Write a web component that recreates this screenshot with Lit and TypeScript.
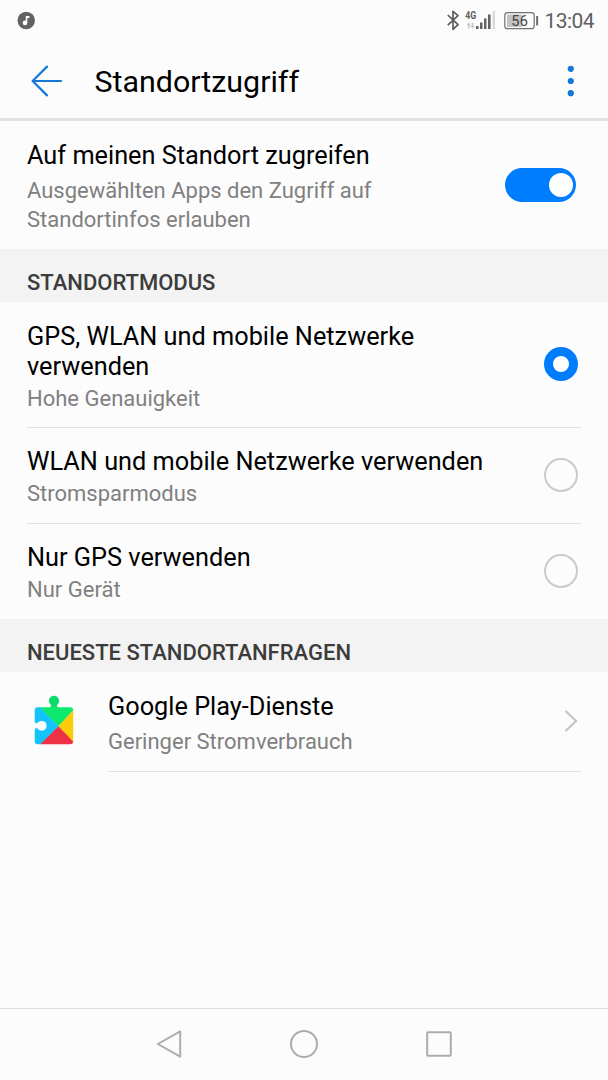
import { LitElement, html, css, svg, nothing } from "lit";
import { customElement, property, state } from "lit/decorators.js";
import { classMap } from "lit/directives/class-map.js";

@customElement("status-bar")
class StatusBar extends LitElement {
  static styles = css`
    :host { display: block; height: 42px; flex: none; }
    svg { display: block; }
    .sys { font-family: Roboto, sans-serif; fill: #5f5f5f; }
    .clock { font-size: 21px; }
    .level { font-size: 14.5px; fill: #444; }
    .net { font-size: 10.5px; font-weight: 700; }
  `;
  render() {
    return html`<svg width="608" height="42" viewBox="0 0 608 42">
      <circle cx="26.2" cy="20.5" r="8.7" fill="#626262" />
      <g fill="#fff">
        <circle cx="25" cy="22.9" r="2.3" />
        <path d="M25.8 16h3.6v2.1h-2.1v4.8h-1.5z" />
      </g>
      <path d="M447.8 15l10.2 9.6-5 4.8V11.3l5 4.4-10.2 9.4" fill="none" stroke="#5c5c5c" stroke-width="1.7" stroke-linejoin="round" />
      <text class="sys net" x="465.3" y="18.9" textLength="11" lengthAdjust="spacingAndGlyphs">4G</text>
      <g fill="#c8c8c8">
        <path d="M468.8 22.6l2.3 2.6h-1.5v3.2H468v-3.2h-1.5zM472.6 28.6l-2.3-2.6h1.5v-3.2h1.6V26h1.5z" />
      </g>
      <g fill="#636363">
        <rect x="476" y="26" width="2.5" height="3" />
        <rect x="480" y="22.5" width="2.5" height="6.5" />
        <rect x="484" y="18.5" width="2.5" height="10.5" />
        <rect x="488" y="14.5" width="2.6" height="14.5" />
      </g>
      <rect x="492.6" y="11" width="2.4" height="18" fill="#d9d9d9" />
      <rect x="507" y="14.5" width="15" height="12.5" fill="#c2c2c2" />
      <rect x="504.8" y="12.7" width="29.4" height="16" rx="2.8" fill="none" stroke="#717171" stroke-width="1.2" />
      <rect x="536.2" y="16" width="1.9" height="9.4" fill="#666" />
      <text class="sys level" x="511.3" y="26" textLength="16.5">56</text>
      <text class="sys clock" x="544.6" y="28.4" textLength="50">13:04</text>
    </svg>`;
  }
}

@customElement("action-bar")
class ActionBar extends LitElement {
  @property() heading = "";
  static styles = css`
    :host {
      display: flex; align-items: center; box-sizing: border-box; flex: none;
      height: 79px; padding: 0 30px; border-bottom: 3px solid #e1e1e1;
      font-family: Roboto, sans-serif;
    }
    svg { display: block; flex: none; }
    .title { flex: 1; margin: 4px 0 0 30.5px; font-size: 30.4px; line-height: 36px; color: #000; }
    .more { margin-top: 2px; }
    .back { margin-top: 2px; }
  `;
  render() {
    return html`
      <svg class="back" width="34" height="34" viewBox="0 0 34 34" fill="none" stroke="#1478d8" stroke-width="2.2" stroke-linecap="round" stroke-linejoin="round">
        <path d="M31 17H2.6M17 2.6L2.6 17 17 31.4" />
      </svg>
      <div class="title">${this.heading}</div>
      <svg class="more" width="14" height="34" viewBox="0 0 14 34" fill="#1478d8">
        <circle cx="6.8" cy="4.8" r="3.1" /><circle cx="6.8" cy="17" r="3.1" /><circle cx="6.8" cy="29.2" r="3.1" />
      </svg>`;
  }
}

@customElement("app-root")
class AppRoot extends LitElement {
  @state() private enabled = true;
  @state() private mode = 0;

  private modes = [
    { title: "GPS, WLAN und mobile Netzwerke verwenden", note: "Hohe Genauigkeit" },
    { title: "WLAN und mobile Netzwerke verwenden", note: "Stromsparmodus" },
    { title: "Nur GPS verwenden", note: "Nur Gerät" },
  ];

  static styles = css`
    :host {
      display: flex; flex-direction: column; box-sizing: border-box;
      width: 608px; height: 1080px; overflow: hidden;
      background: #fcfcfc; color: #000; font-family: Roboto, sans-serif;
    }
    .row { display: flex; align-items: center; box-sizing: border-box; flex: none; padding: 0 27px; }
    .text { flex: 1; min-width: 0; }
    .title { font-size: 25.3px; line-height: 30px; }
    .note { margin-top: 2px; font-size: 22px; line-height: 29px; color: #808080; }
    .access { height: 128px; padding-right: 32px; justify-content: space-between; }
    .access .text { max-width: 360px; margin-top: 4px; }
    .access .note, .app .note { margin-top: 5px; }
    .mode { height: 95px; }
    .mode .text { padding-right: 48px; margin-top: 4px; }
    .mode.tall { height: 125px; }
    .mode.tall .text { margin-top: 5px; }
    .rule { flex: none; height: 1px; margin: 0 27px; background: #e0e0e0; }
    .rule.inset { margin-left: 108px; }
    .section {
      display: flex; align-items: flex-end; box-sizing: border-box; flex: none;
      height: 53px; padding: 0 27px 5px; background: #f3f3f3;
      font-size: 22px; line-height: 28px; font-weight: 500; color: #3c3c3c;
    }
    .switch {
      display: flex; align-items: center; justify-content: flex-end; box-sizing: border-box;
      width: 71px; height: 34px; margin-bottom: 1px; padding: 0 3.5px; border-radius: 17px; background: #007dff;
    }
    .switch.off { justify-content: flex-start; background: #bbb; }
    .knob { width: 24px; height: 24px; border-radius: 50%; background: #fff; }
    .radio { box-sizing: border-box; width: 34px; height: 34px; margin: 0 3px 1px 0; border: 2px solid #cacaca; border-radius: 50%; }
    .radio.on { border: 9px solid #007dff; background: #fff; }
    .app { height: 99px; }
    .app .text { margin-top: 4px; }
    .logo { margin: 0 28px 2px 0; }
    .chevron { margin-bottom: 1px; }
    svg { display: block; flex: none; }
    .fill { flex: 1; }
    .nav {
      display: flex; align-items: center; justify-content: center; gap: 101px;
      box-sizing: border-box; flex: none; height: 72px; padding-bottom: 2px; border-top: 1px solid #dedede;
    }
  `;

  private renderMode(m: { title: string; note: string }, i: number) {
    const last = i === this.modes.length - 1;
    return html`
      <div class=${classMap({ row: true, mode: true, tall: i === 0 })} @click=${() => (this.mode = i)}>
        <div class="text"><div class="title">${m.title}</div><div class="note">${m.note}</div></div>
        <div class=${classMap({ radio: true, on: this.mode === i })}></div>
      </div>
      ${last ? nothing : html`<div class="rule"></div>`}`;
  }

  render() {
    return html`
      <status-bar></status-bar>
      <action-bar heading="Standortzugriff"></action-bar>
      <div class="row access">
        <div class="text">
          <div class="title">Auf meinen Standort zugreifen</div>
          <div class="note">Ausgewählten Apps den Zugriff auf Standortinfos erlauben</div>
        </div>
        <div class=${classMap({ switch: true, off: !this.enabled })} @click=${() => (this.enabled = !this.enabled)}>
          <div class="knob"></div>
        </div>
      </div>
      <div class="section">STANDORTMODUS</div>
      ${this.modes.map((m, i) => this.renderMode(m, i))}
      <div class="section">NEUESTE STANDORTANFRAGEN</div>
      <div class="row app">
        <svg class="logo" width="53" height="53" viewBox="27 694 53 53">
          <defs><clipPath id="piece"><rect x="34.7" y="707.3" width="38.5" height="37" rx="3" /></clipPath></defs>
          <g clip-path="url(#piece)">
            <path d="M34 707h6l18.5 19.3L40 745h-6z" fill="#12c4fb" />
            <path d="M39 706.5h38L58.5 726.3z" fill="#0bea6e" />
            <path d="M76 707V745h-1L58.5 726.3z" fill="#fdcd0b" />
            <path d="M58.5 726.3L76.5 745H39.5z" fill="#ee3145" />
          </g>
          <circle cx="54" cy="700.8" r="5.1" fill="#0bdc69" />
          <path d="M51 703h6v3q0 1.6 2 1.8H49q2-.2 2-1.8z" fill="#0bdc69" />
          <circle cx="41.7" cy="725.8" r="4.9" fill="#fcfcfc" />
          <path d="M34 721.5q1.5 2 3.2 2h2v4.6h-2q-1.7 0-3.2 2z" fill="#fcfcfc" />
        </svg>
        <div class="text"><div class="title">Google Play-Dienste</div><div class="note">Geringer Stromverbrauch</div></div>
        <svg class="chevron" width="20" height="26" viewBox="0 0 20 26" fill="none" stroke="#c4c4c4" stroke-width="2.2"><path d="M4.5 3l10.6 10-10.6 10" /></svg>
      </div>
      <div class="rule inset"></div>
      <div class="fill"></div>
      <div class="nav">
        ${[
          svg`<path d="M28.2 4.3v25.4L5.8 17z" />`,
          svg`<circle cx="17" cy="17" r="13" />`,
          svg`<rect x="5.2" y="5.2" width="23.6" height="23.6" rx="1" />`,
        ].map((g) => html`<svg width="34" height="34" viewBox="0 0 34 34" fill="none" stroke="#adadad" stroke-width="2" stroke-linejoin="round">${g}</svg>`)}
      </div>`;
  }
}
